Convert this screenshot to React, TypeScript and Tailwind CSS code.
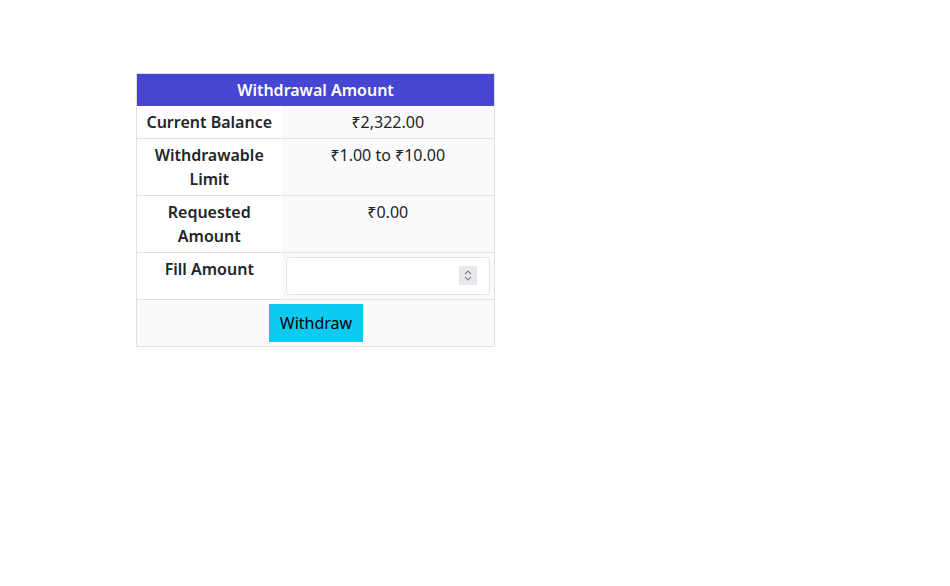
import React from 'react';

const rows = [
  { label: 'Current Balance', value: '₹2,322.00' },
  { label: 'Withdrawable Limit', value: '₹1.00 to ₹10.00' },
  { label: 'Requested Amount', value: '₹0.00' },
];

export default function App() {
  return (
    <div
      className="min-h-screen bg-white text-[16px] leading-6 text-[#212529]"
      style={{ fontFamily: '"Noto Sans", "DejaVu Sans", sans-serif' }}
    >
      <div className="pt-[73px] pl-[136px]">
        <table className="w-[359px] border-collapse border border-[#dee2e6] table-fixed">
          <colgroup>
            <col className="w-[145px]" />
            <col />
          </colgroup>
          <thead>
            <tr>
              <th
                colSpan={2}
                className="bg-[#4646d2] text-white font-semibold text-center py-1 h-8"
              >
                Withdrawal Amount
              </th>
            </tr>
          </thead>
          <tbody>
            {rows.map((r) => (
              <tr key={r.label} className="border-b border-[#dee2e6] align-top">
                <td className="p-1 text-center font-semibold bg-white">{r.label}</td>
                <td className="p-1 text-center bg-[#fafafa]">{r.value}</td>
              </tr>
            ))}
            <tr className="border-b border-[#dee2e6] align-top">
              <td className="p-1 text-center font-semibold bg-white">Fill Amount</td>
              <td className="p-1 bg-[#fafafa]">
                <div className="relative">
                  <input
                    type="text"
                    className="block w-full h-[38px] rounded border border-[#dee2e6] bg-white px-3 outline-none"
                  />
                  <div className="absolute right-[13px] top-[9px] w-[18px] h-[19px] bg-[#e9e9ed] flex items-center justify-center">
                    <svg width="10" height="13" viewBox="0 0 10 13" fill="none" stroke="#8a8a8a" strokeWidth="1.2">
                      <path d="M2 5 L5 2 L8 5" />
                      <path d="M2 8 L5 11 L8 8" />
                    </svg>
                  </div>
                </div>
              </td>
            </tr>
            <tr>
              <td colSpan={2} className="p-1 text-center bg-[#fafafa]">
                <button className="h-[38px] w-[94px] bg-[#0dcaf0] text-black pl-[1px]">Withdraw</button>
              </td>
            </tr>
          </tbody>
        </table>
      </div>
    </div>
  );
}
